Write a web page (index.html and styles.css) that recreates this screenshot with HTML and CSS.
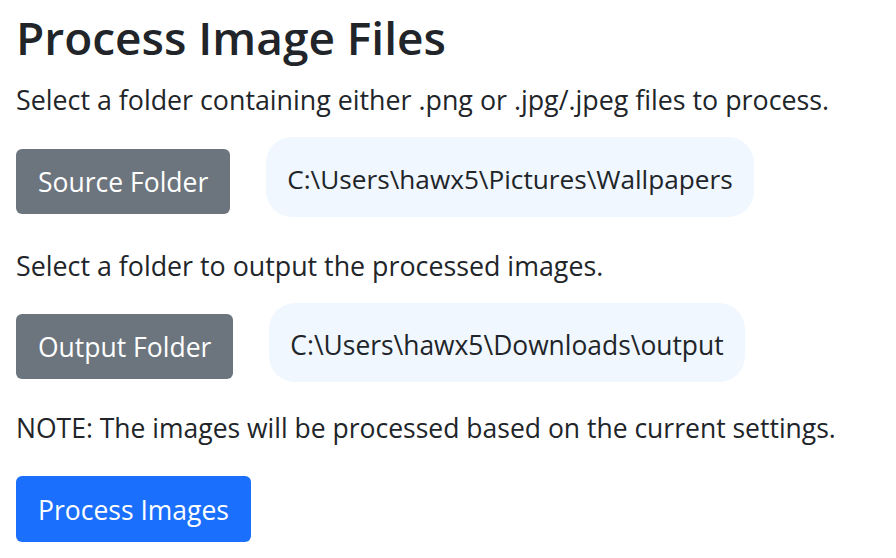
FILE: index.html
```html
<!DOCTYPE html>
<html lang="en">
<head>
<meta charset="utf-8">
<title>Process Image Files</title>
<link rel="stylesheet" href="styles.css">
</head>
<body>
<main class="page">
  <h1 class="title">Process Image Files</h1>
  <p class="text text-intro">Select a folder containing either .png or .jpg/.jpeg files to process.</p>
  <div class="row row-source">
    <button class="btn btn-secondary" type="button">Source Folder</button>
    <div class="path">C:\Users\hawx5\Pictures\Wallpapers</div>
  </div>
  <p class="text text-output">Select a folder to output the processed images.</p>
  <div class="row row-output">
    <button class="btn btn-secondary" type="button">Output Folder</button>
    <div class="path">C:\Users\hawx5\Downloads\output</div>
  </div>
  <p class="text text-note">NOTE: The images will be processed based on the current settings.</p>
  <button class="btn btn-primary" type="button">Process Images</button>
</main>
</body>
</html>
```

FILE: styles.css
```css
* { box-sizing: border-box; }
html, body { margin: 0; padding: 0; background: #fff; }
body {
  font-family: "Open Sans", "Noto Sans", "Liberation Sans", sans-serif;
  color: #212529;
  font-size: 26.8px;
}
.page {
  padding: 7px 16px 0 16px;
  display: flex;
  flex-direction: column;
  align-items: flex-start;
}
.title {
  margin: 0;
  font-size: 46px;
  font-weight: 600;
  line-height: 60px;
}
.text {
  margin: 0;
  line-height: 36px;
  white-space: nowrap;
}
.text-intro { margin-top: 15px; }
.text-output { margin-top: 31px; }
.text-note { margin-top: 28px; font-size: 26.5px; }
.row {
  display: flex;
  align-items: center;
  gap: 36px;
  margin-top: 19px;
}
.btn {
  font-family: inherit;
  font-size: 26.5px;
  line-height: 39px;
  color: #fff;
  border: 0;
  border-radius: 6px;
  padding: 14px 22px 12px 22px;
  height: 65px;
  white-space: nowrap;
  cursor: pointer;
}
.row .btn { margin-top: 8px; }
.btn-secondary { background: #6c757d; }
.btn-primary { background: #1b6ffd; margin-top: 30px; height: 66px; }
.path {
  background: #f0f7fe;
  border-radius: 26px;
  padding: 4px 21px 0 21px;
  height: 80px;
  display: flex;
  align-items: center;
  font-size: 26.2px;
  white-space: nowrap;
}
.row-output .path { height: 79px; font-size: 26.4px; }
```
